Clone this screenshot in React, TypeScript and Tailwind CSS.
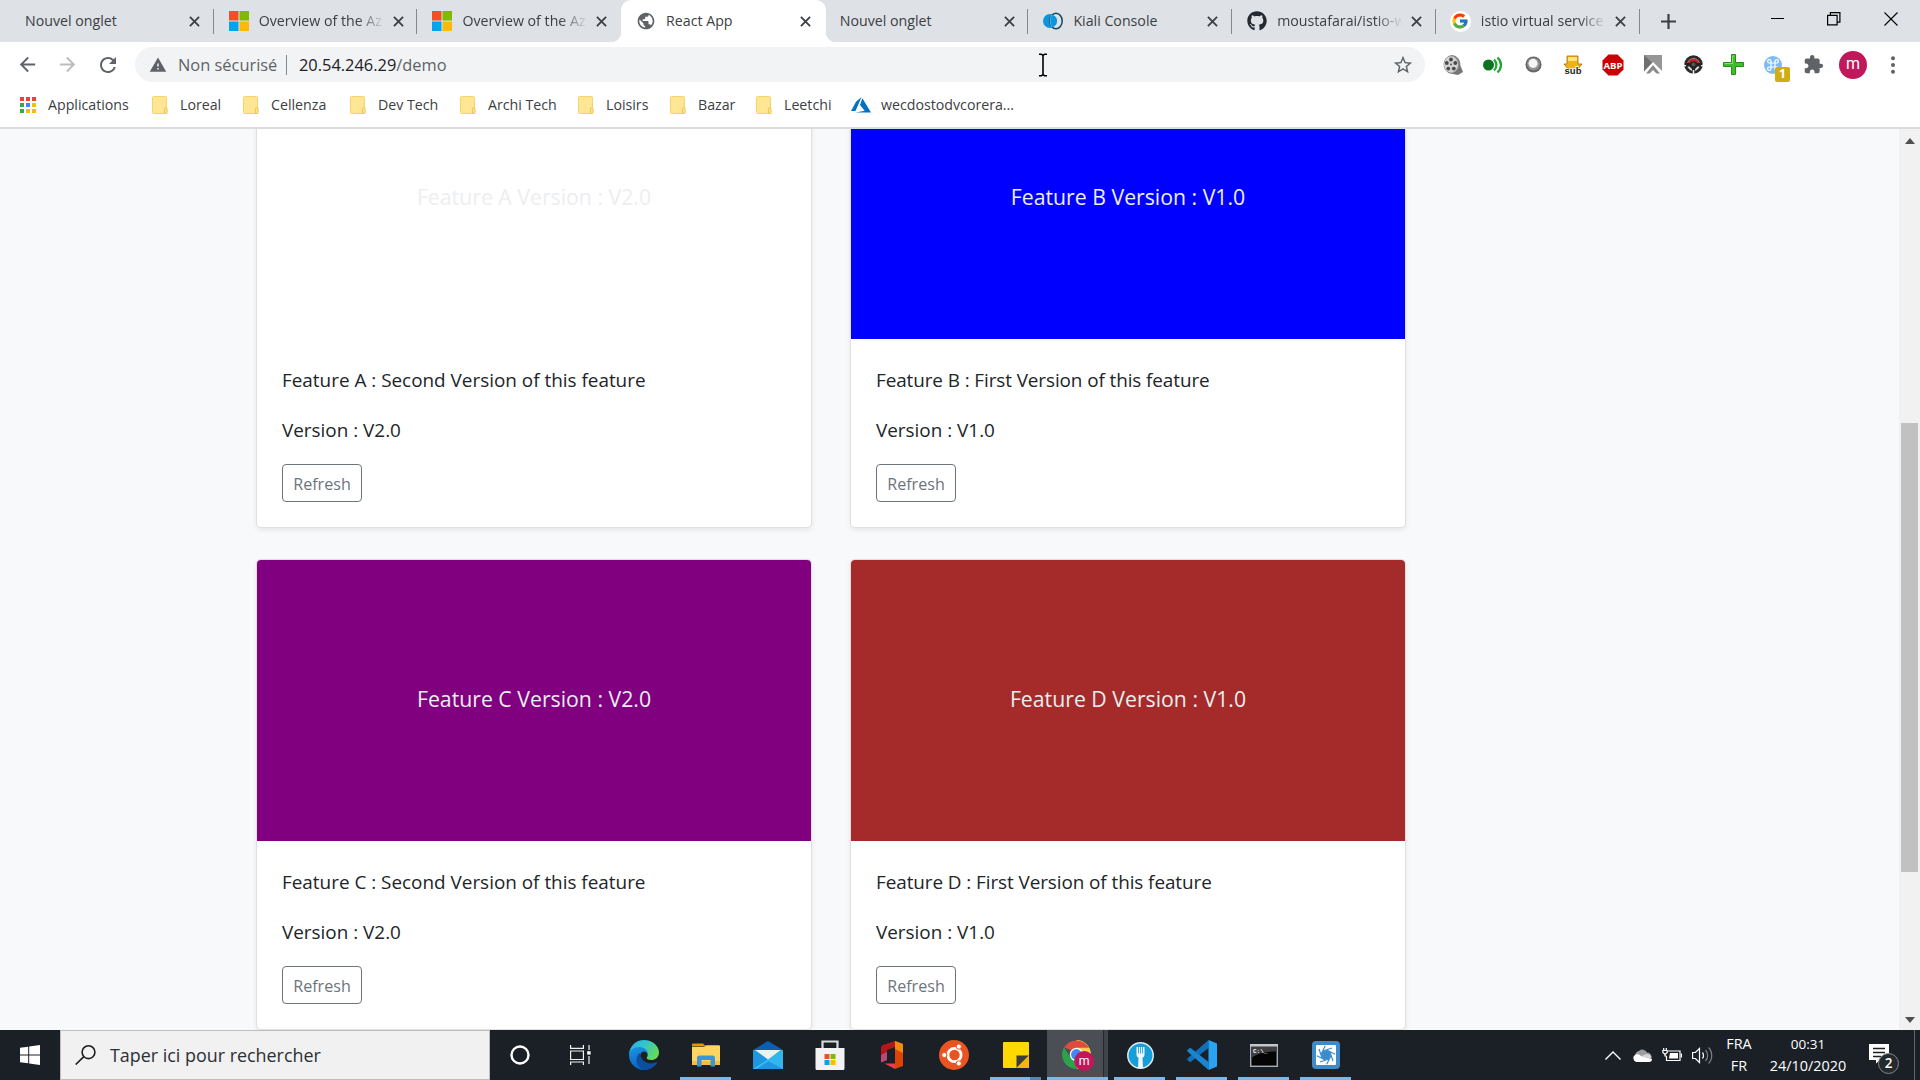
import React from 'react';
import { FaGithub } from 'react-icons/fa';
import { FcGoogle } from 'react-icons/fc';
import { MdArrowBack, MdArrowForward, MdRefresh, MdStarBorder, MdExtension, MdPublic, MdWarning } from 'react-icons/md';

/* ---------- Tab icons ---------- */

function MicrosoftLogo({ className }: { className: string }) {
  return (
    <svg className={className} viewBox="0 0 20 20">
      <path fill="#f25022" d="M0 0h9.5v9.5H0z" />
      <path fill="#7fba00" d="M10.5 0H20v9.5h-9.5z" />
      <path fill="#00a4ef" d="M0 10.5h9.5V20H0z" />
      <path fill="#ffb900" d="M10.5 10.5H20V20h-9.5z" />
    </svg>
  );
}

function KialiLogo() {
  return (
    <svg className="h-5 w-5" viewBox="0 0 20 20">
      <circle cx="7" cy="10" r="7" fill="#0d96df" />
      <ellipse cx="13" cy="10" rx="6.200" ry="7.800" fill="#dee1e6" stroke="#14495f" strokeWidth="1.500" />
      <path d="M9 3.800C13.500 5 14 8 14 10s-.5 5-5 6.200C7 13.500 7 6.500 9 3.800z" fill="#0d96df" />
      <path d="M9 3.800c-2.300 2.700-2.300 9.700 0 12.400" fill="none" stroke="#4fb8ea" strokeWidth="1" />
    </svg>
  );
}

function GoogleLogo() {
  return (
    <span className="-ml-[1px] flex h-[21px] w-[21px] items-center justify-center rounded-full bg-white">
      <FcGoogle className="h-[18px] w-[18px]" />
    </span>
  );
}

function CloseGlyph({ className }: { className: string }) {
  return (
    <svg className={className} viewBox="0 0 12 12" stroke="#3c4043" strokeWidth="2" fill="none">
      <path d="M1 1l10 10M11 1L1 11" />
    </svg>
  );
}

/* ---------- Tab strip ---------- */

type TabData = { title: string; icon?: React.ReactNode; fade?: boolean; active?: boolean; separator?: boolean };

const tabs: TabData[] = [
  { title: 'Nouvel onglet', separator: true },
  { title: 'Overview of the Az', icon: <MicrosoftLogo className="h-5 w-5" />, fade: true, separator: true },
  { title: 'Overview of the Az', icon: <MicrosoftLogo className="h-5 w-5" />, fade: true },
  { title: 'React App', icon: <MdPublic className="h-[22px] w-[22px] text-[#5f6368]" />, active: true },
  { title: 'Nouvel onglet', separator: true },
  { title: 'Kiali Console', icon: <KialiLogo />, separator: true },
  { title: 'moustafarai/istio-w', icon: <FaGithub className="h-5 w-5 text-[#24292e]" />, fade: true, separator: true },
  { title: 'istio virtual service', icon: <GoogleLogo />, fade: true, separator: true },
];

function Tab({ tab }: { tab: TabData }) {
  return (
    <div
      className={
        'relative flex h-[42px] w-[203.7px] items-center pl-[13px] ' +
        (tab.active ? '-ml-[2px] mr-[1px] w-[204.7px] rounded-t-[10px] bg-white pl-[15px]' : '')
      }
    >
      {tab.active && (
        <>
          <span className="absolute bottom-0 -left-2.5 h-2.5 w-2.5 bg-[radial-gradient(circle_at_0_0,transparent_10px,white_10.5px)]" />
          <span className="absolute -right-2.5 bottom-0 h-2.5 w-2.5 bg-[radial-gradient(circle_at_100%_0,transparent_10px,white_10.5px)]" />
        </>
      )}
      {tab.icon && <span className="mr-[10px] flex w-5 shrink-0 justify-center">{tab.icon}</span>}
      <span
        className={
          'text-[14.2px] whitespace-nowrap text-[#3c4043] ' +
          (tab.icon ? 'w-[131px] ' : 'w-[161px] ') +
          (tab.fade ? '[mask-image:linear-gradient(to_right,black_98px,transparent_126px)]' : '')
        }
      >
        {tab.title}
      </span>
      <CloseGlyph className="ml-[3px] h-[11px] w-[11px] shrink-0" />
      {tab.separator && <span className="absolute top-[9px] right-0.5 h-[25px] w-px bg-[#85888d]" />}
    </div>
  );
}

function TabStrip() {
  return (
    <div className="flex h-[42px] items-center bg-[#dee1e6] pl-3">
      {tabs.map((tab, i) => (
        <Tab key={i} tab={tab} />
      ))}
      <svg className="ml-[19px] h-[15px] w-[15px]" viewBox="0 0 15 15" stroke="#3c4043" strokeWidth="2.200">
        <path d="M7.500 0v15M0 7.500h15" />
      </svg>
      <div className="mb-[5px] ml-auto flex items-center pr-[22px]">
        <svg className="mr-[42px] h-[14px] w-[14px]" viewBox="0 0 14 14" stroke="#000" strokeWidth="1">
          <path d="M0 6.500h13" />
        </svg>
        <svg className="mr-[43px] h-[14px] w-[14px]" viewBox="0 0 14 14" stroke="#000" strokeWidth="1.200" fill="none">
          <path d="M.6 3.400h9.500v9.500H.6zM3.400 3.400V.6h9.500v9.500h-2.800" />
        </svg>
        <svg className="h-[14px] w-[14px]" viewBox="0 0 14 14" stroke="#000" strokeWidth="1.100">
          <path d="M.5 .5l13 13M13.500 .5l-13 13" />
        </svg>
      </div>
    </div>
  );
}

/* ---------- Toolbar extensions ---------- */

const extensions: React.ReactNode[] = [
  <svg viewBox="0 0 20 20" className="h-5 w-5">
    <path d="M13 4l5 8 2 5-5 3-5-1z" fill="#777" />
    <ellipse cx="9" cy="9.500" rx="8" ry="9" fill="#8c8c8c" stroke="#666" strokeWidth=".7" />
    <ellipse cx="8" cy="9.500" rx="7" ry="8.200" fill="#d2d2d2" />
    <g fill="#4a4a4a">
      <circle cx="8" cy="4.500" r="1.900" />
      <circle cx="12.300" cy="8" r="1.900" />
      <circle cx="10.800" cy="13.600" r="1.900" />
      <circle cx="5.300" cy="13.600" r="1.900" />
      <circle cx="3.800" cy="8" r="1.900" />
      <circle cx="8" cy="9.500" r=".9" />
    </g>
  </svg>,
  <svg viewBox="0 0 20 20" className="h-5 w-5" fill="none">
    <circle cx="5.500" cy="10" r="5.500" fill="#0b7420" />
    <path d="M11 4.500c3.200 3 3.200 8 0 11M14.500 2.500c4.600 4.300 4.600 10.700 0 15" stroke="#1fa62c" strokeWidth="2.300" />
  </svg>,
  <svg viewBox="0 0 18 18" className="h-[17px] w-[17px]">
    <circle cx="9" cy="9" r="8.500" fill="#666" />
    <circle cx="9" cy="8.600" r="6.800" fill="#8f8f8f" />
    <circle cx="8.500" cy="7.800" r="4.800" fill="#f5f5f5" />
    <path d="M9.500 12.500c2.500-.5 4-2.500 4-4.500" stroke="#ccc" fill="none" />
  </svg>,
  <svg viewBox="0 0 20 20" className="h-5 w-5">
    <path d="M4 1h11v8h4l-4 5H5L1 9h3z" fill="#edb31a" stroke="#a36c0c" strokeWidth=".8" />
    <path d="M5 2h9v4H5z" fill="#ffe475" />
    <text x="10" y="19.400" fontSize="9.500" fontWeight="700" textAnchor="middle" fill="#222" stroke="#fff" strokeWidth="1.500" paintOrder="stroke" fontFamily="Liberation Sans">
      sub
    </text>
  </svg>,
  <svg viewBox="0 0 22 22" className="h-[22px] w-[22px]">
    <path d="M6.500 .5h9l6 6v9l-6 6h-9l-6-6v-9z" fill="#cc0000" />
    <text x="11" y="14.500" fontSize="9.500" fontWeight="700" textAnchor="middle" fill="#fff" fontFamily="Open Sans">
      ABP
    </text>
  </svg>,
  <svg viewBox="0 0 18 19" className="h-[19px] w-[18px]">
    <path d="M0 0h18v18L9 9 0 17z" fill="#969696" />
    <path d="M0 0l9 8.500L0 17z" fill="#6f6f6f" />
    <path d="M0 16.500L9 7l9 9v3H0z" fill="#fff" />
    <path d="M2 18.500L9 10l7 8.500h-3.500L9 15l-3.500 3.500z" fill="#8a8a8a" />
  </svg>,
  <svg viewBox="0 0 19 19" className="h-[19px] w-[19px]">
    <circle cx="9.500" cy="9.500" r="9.300" fill="#2b2b2b" />
    <circle cx="9.500" cy="9.500" r="6.300" fill="#ddd" />
    <path d="M3.600 8a6.200 6.200 0 0 1 11.800 0z" fill="#c52323" />
    <path d="M1 8h5l1.500-1.500h4L13 8h5v3.500h-4.500L11 14v4H8v-4l-2.500-2.500H1z" fill="#222" />
    <path d="M0 10l2 1M19 10l-2 1" stroke="#fff" strokeWidth="1.200" />
    <circle cx="9.500" cy="9.500" r="2" fill="#555" />
    <path d="M8.700 15h1.600v4H8.700z" fill="#eee" />
  </svg>,
  <svg viewBox="0 0 21 21" className="h-[21px] w-[21px]">
    <path d="M8.500 .5h4V8.500h8v4h-8v8h-4v-8h-8v-4h8z" fill="#3fbf2b" stroke="#2a8a1c" />
    <path d="M9.500 2h2M9.500 2v7.500h-8" fill="none" stroke="#86e36f" />
  </svg>,
  <span className="relative">
    <svg viewBox="0 0 18 18" className="h-[18px] w-[18px]">
      <circle cx="9" cy="9" r="9" fill="#7dbcf3" />
      <path
        d="M7 7V5.300A1.700 1.700 0 1 0 5.300 7h7.400A1.700 1.700 0 1 0 11 5.300v7.400a1.700 1.700 0 1 0 1.700-1.700H5.300A1.700 1.700 0 1 0 7 12.700z"
        stroke="#fff"
        strokeWidth="1.200"
        fill="none"
      />
    </svg>
    <span className="absolute top-[11px] left-[11px] flex h-[15px] w-[15px] items-center justify-center rounded-[2px] bg-[#d2ad12] text-[12px] leading-none font-bold text-white">
      1
    </span>
  </span>,
  <MdExtension className="h-[21px] w-[21px] text-[#5f6368]" />,
  <span className="flex h-7 w-7 items-center justify-center rounded-full bg-[#c2185b] pb-[2px] font-['Roboto'] text-[16px] leading-none text-white">
    m
  </span>,
  <svg viewBox="0 0 4 18" className="h-[18px] w-1" fill="#5f6368">
    <circle cx="2" cy="2.200" r="2" />
    <circle cx="2" cy="9" r="2" />
    <circle cx="2" cy="15.800" r="2" />
  </svg>,
];

function Toolbar() {
  return (
    <div className="flex h-[45px] items-center bg-white pl-4">
      <MdArrowBack className="h-[23px] w-[23px] text-[#5f6368]" />
      <MdArrowForward className="ml-[17px] h-[23px] w-[23px] text-[#babcbe]" />
      <MdRefresh className="ml-[17px] h-[24px] w-[24px] text-[#5f6368]" />
      <div className="ml-[15px] flex h-[35px] w-[1290px] items-center rounded-full bg-[#f1f3f4] pr-[11px] pl-[14px] text-[16.400px]">
        <MdWarning className="h-[18px] w-[18px] text-[#5f6368]" />
        <span className="ml-[11px] w-[108px] pt-px text-[#5f6368]">Non sécurisé</span>
        <span className="h-5 w-px bg-[#85888d]" />
        <span className="ml-3 w-[149px] pt-px text-[#202124]">
          20.54.246.29<span className="text-[#5f6368]">/demo</span>
        </span>
        <svg className="ml-[590px] h-6 w-[10px]" viewBox="0 0 10 24" stroke="#000" strokeWidth="1.600" fill="none">
          <path d="M1 1.300h2.500L5 2.300l1.500-1H9M5 2v20M1 22.700h2.500l1.500-1 1.500 1H9" />
        </svg>
        <MdStarBorder className="ml-auto h-[22px] w-[22px] text-[#5f6368]" />
      </div>
      <div className="ml-2 flex">
        {extensions.map((icon, i) => (
          <span key={i} className="flex w-10 items-center justify-center">
            {icon}
          </span>
        ))}
      </div>
    </div>
  );
}

/* ---------- Bookmarks ---------- */

function Folder() {
  return (
    <svg viewBox="0 0 16 18" className="h-[18px] w-4">
      <path d="M1.500 .5h12a1 1 0 0 1 1 1v15a1 1 0 0 1-1 1h-12a1 1 0 0 1-1-1v-15a1 1 0 0 1 1-1z" fill="#ffe694" stroke="#f6d568" />
      <path d="M12.500 17.500v-4.500a1.300 1.300 0 0 1 2.600 0v3.500a1 1 0 0 1-1 1z" fill="#ffe694" stroke="#eec23f" strokeWidth=".9" />
    </svg>
  );
}

function Bookmark({ label, width, children }: { label: string; width: string; children?: React.ReactNode }) {
  return (
    <div className={'flex shrink-0 items-center whitespace-nowrap ' + width}>
      {children ?? <Folder />}
      <span className="ml-3">{label}</span>
    </div>
  );
}

function BookmarksBar() {
  return (
    <div className="flex h-[42px] items-center border-b-2 border-[#dadce0] bg-white pb-1 pl-5 text-[14.2px] text-[#3c4043]">
      <Bookmark label="Applications" width="w-[132px]">
        <svg viewBox="0 0 16 16" className="h-4 w-4">
          <path fill="#ea4335" d="M0 0h4v4H0zM6 0h4v4H6zM12 0h4v4h-4z" />
          <path fill="#34a853" d="M0 6h4v4H0zM0 12h4v4H0z" />
          <path fill="#4285f4" d="M6 6h4v4H6z" />
          <path fill="#fbbc05" d="M12 6h4v4h-4zM6 12h4v4H6zM12 12h4v4h-4z" />
        </svg>
      </Bookmark>
      <Bookmark label="Loreal" width="w-[91px]" />
      <Bookmark label="Cellenza" width="w-[107px]" />
      <Bookmark label="Dev Tech" width="w-[110px]" />
      <Bookmark label="Archi Tech" width="w-[118px]" />
      <Bookmark label="Loisirs" width="w-[92px]" />
      <Bookmark label="Bazar" width="w-[86px]" />
      <Bookmark label="Leetchi" width="w-[95px]" />
      <Bookmark label="wecdostodvcorera..." width="w-[170px]">
        <svg viewBox="0 0 20 16" className="-mr-[2px] h-4 w-5" fill="#0072c6">
          <path d="M10.600 0L5 4.700 0 14h4.500zM11.400 1.200L9 8l4.700 5.800L4.700 15.600H20z" />
        </svg>
      </Bookmark>
    </div>
  );
}

/* ---------- Page ---------- */

type Feature = { name: string; order: string; version: string; banner: string; tracking: string };

const features: Feature[] = [
  { name: 'Feature A', order: 'Second', version: 'V2.0', banner: 'bg-white', tracking: 'tracking-normal' },
  { name: 'Feature B', order: 'First', version: 'V1.0', banner: 'bg-[#0000ff]', tracking: 'tracking-[-0.090px]' },
  { name: 'Feature C', order: 'Second', version: 'V2.0', banner: 'bg-[#800080]', tracking: 'tracking-normal' },
  { name: 'Feature D', order: 'First', version: 'V1.0', banner: 'bg-[#a52a2a]', tracking: 'tracking-[-0.075px]' },
];

function FeatureCard({ feature }: { feature: Feature }) {
  return (
    <article className="h-[471px] overflow-hidden rounded-[5px] border border-black/12 bg-white shadow-[0_2px_5px_rgba(0,0,0,0.08)]">
      <div
        className={
          'flex h-[281px] items-center justify-center pb-1 text-[21.250px] text-[#eceeef] ' + feature.banner
        }
      >
        {feature.name} Version : {feature.version}
      </div>
      <div className="px-[25px] pt-[26px] text-[18.900px] leading-[30px] text-[#212529]">
        <p className={'mb-5 ' + feature.tracking}>
          {feature.name} : {feature.order} Version of this feature
        </p>
        <p className="mb-[19px]">Version : {feature.version}</p>
        <button className="flex h-[38px] w-20 items-center justify-center rounded-[4px] border border-[#6c757d] pt-px text-[16.100px] text-[#6c757d]">
          Refresh
        </button>
      </div>
    </article>
  );
}

function Page() {
  return (
    <div className="flex h-[901px] bg-[#f8f9fa]">
      <main className="h-full flex-1 overflow-hidden">
        <div className="-mt-[72px] ml-[256px] grid w-[1150px] grid-cols-[556px_556px] gap-x-[38px] gap-y-[31px]">
          {features.map((f) => (
            <FeatureCard key={f.name} feature={f} />
          ))}
        </div>
      </main>
      <div className="flex w-[21px] flex-col items-center bg-[#f1f1f1] pt-[9px] pb-[7px]">
        <svg viewBox="0 0 10 6" className="h-[6px] w-[10px]" fill="#505050">
          <path d="M5 0l5 6H0z" />
        </svg>
        <div className="mt-[279px] h-[449px] w-[17px] bg-[#c1c1c1]" />
        <svg viewBox="0 0 10 6" className="mt-auto h-[6px] w-[10px]" fill="#505050">
          <path d="M0 0h10L5 6z" />
        </svg>
      </div>
    </div>
  );
}

/* ---------- Taskbar icons ---------- */

function EdgeIcon() {
  return (
    <svg viewBox="0 0 30 30" className="h-[30px] w-[30px]">
      <defs>
        <linearGradient id="edge-top" x1="0" y1="0" x2="1" y2=".5">
          <stop offset="0" stopColor="#29a9e8" />
          <stop offset=".5" stopColor="#32c5cf" />
          <stop offset="1" stopColor="#63d957" />
        </linearGradient>
        <linearGradient id="edge-left" x1="0" y1="0" x2=".3" y2="1">
          <stop offset="0" stopColor="#1b96e0" />
          <stop offset="1" stopColor="#0b62c4" />
        </linearGradient>
      </defs>
      <path d="M0 14.500C.5 6 7 0 15 0c8.500 0 15 6 15 12.500 0 5-4 7.500-7.500 7.500-3 0-4.800-1-4.800-2 0-.8 1-1.200 1-3.200 0-3-3-5.800-7.500-5.800C6 9 2 11 0 14.500z" fill="url(#edge-top)" />
      <path d="M0 15c0-5 5-8 10-8 5.500 0 9 3.500 9 7.500-1-2-2.500-3-4.200-3-2 0-3.800 2-3.800 5.500 0 6 6 11.500 12 10-2.500 2-5 3-8 3C6.500 30 0 23 0 15z" fill="url(#edge-left)" />
      <path d="M11 13c-2.500 1.500-3.500 4-3.500 7 0 4.500 3 8.500 7.500 10 6 0 10.500-3 13-7 .4-.8-.3-1-1-.700-6 2.800-15 .5-16-9.300z" fill="#0c4f9e" />
    </svg>
  );
}

function ExplorerIcon() {
  return (
    <svg viewBox="0 0 28 24" className="h-6 w-7">
      <path d="M0 1.500A1 1 0 0 1 1 .5h10l3 3H0z" fill="#d99a0b" />
      <path d="M0 4h12l2-1.800h13a1 1 0 0 1 1 1V22H0z" fill="#ffd461" />
      <path d="M0 18h28v4H0z" fill="#f5bd45" />
      <path d="M5 23.500V15a2.500 2.500 0 0 1 2.500-2.500h13A2.500 2.500 0 0 1 23 15v8.500h-4.500V17h-9v6.500z" fill="#3d95d8" />
    </svg>
  );
}

function MailIcon() {
  return (
    <svg viewBox="0 0 30 28" className="h-7 w-[30px]">
      <path d="M0 9L15 0l15 9z" fill="#0c5eb0" />
      <path d="M0 9h30v19H0z" fill="#2196e0" />
      <path d="M30 9v19L15 18.500z" fill="#2ba8ea" />
      <path d="M0 28L30 9v2L3 28z" fill="#38c0f2" />
      <path d="M14 19.500L30 9v0L30 28z" fill="#33b6ee" />
      <path d="M2 9h26l-13 9.500z" fill="#eef0f3" />
    </svg>
  );
}

function StoreIcon() {
  return (
    <svg viewBox="0 0 30 30" className="h-[30px] w-[30px]">
      <path d="M7.500 9V1.500h15V9" fill="none" stroke="#dcdcdc" strokeWidth="2.200" />
      <path d="M.5 8h29v20.500a1.500 1.500 0 0 1-1.500 1.500H2a1.500 1.500 0 0 1-1.500-1.500z" fill="#f3f3f3" />
      <path fill="#f25022" d="M9.500 14h5v5h-5z" />
      <path fill="#7fba00" d="M15.500 14h5v5h-5z" />
      <path fill="#00a4ef" d="M9.500 20h5v5h-5z" />
      <path fill="#ffb900" d="M15.500 20h5v5h-5z" />
    </svg>
  );
}

function OfficeIcon() {
  return (
    <svg viewBox="0 0 24 28" className="h-7 w-6">
      <path d="M15 0l8 3v22l-8 3V0z" fill="#dc4405" />
      <path d="M15 0l8 3v9l-8-4z" fill="#f08a10" />
      <path d="M15 0v6L7 9v10l-6 2.500V7q0-2 2-3z" fill="#b5161b" />
      <path d="M1 14l6-3v8l-6 2.500z" fill="#b84a78" />
      <path d="M4.500 22.500H15V28z" fill="#f03a54" />
    </svg>
  );
}

function UbuntuIcon() {
  return (
    <svg viewBox="0 0 30 30" className="h-[30px] w-[30px]">
      <circle cx="15" cy="15" r="15" fill="#e95420" />
      <circle cx="15.500" cy="15" r="6.600" fill="none" stroke="#fff" strokeWidth="2.800" />
      <g fill="#fff" stroke="#e95420" strokeWidth="1">
        <circle cx="5.300" cy="15" r="2.600" />
        <circle cx="19.800" cy="6.600" r="2.600" />
        <circle cx="19.800" cy="23.400" r="2.600" />
      </g>
    </svg>
  );
}

function StickyIcon() {
  return (
    <svg viewBox="0 0 26 26" className="h-[26px] w-[26px]">
      <path d="M1 0h24a1 1 0 0 1 1 1v24a1 1 0 0 1-1 1H1a1 1 0 0 1-1-1V1a1 1 0 0 1 1-1z" fill="#ffd800" />
      <path d="M13.500 13.500H26L13.500 26z" fill="#3d3d3d" />
      <path d="M26 13.500V26H13.500z" fill="#f5b50a" />
    </svg>
  );
}

function ChromeIcon() {
  return (
    <svg viewBox="0 0 32 30" className="ml-[6px] h-[31px] w-[33px]">
      <path d="M14 14V0A14 14 0 0 1 28 14 14 14 0 0 1 14 28l7-14z" fill="#fbd04b" />
      <path d="M26.100 7.500H14L9 10 2 7A14 14 0 0 1 26.100 7.500z" fill="#df4b3f" />
      <path d="M1.900 7A14 14 0 0 0 14 28l5-9.500-10.500-1z" fill="#2ba24c" />
      <circle cx="14" cy="14" r="6.500" fill="#fff" />
      <circle cx="14" cy="14" r="5.200" fill="#4285f4" />
      <circle cx="21.500" cy="20.300" r="9.700" fill="#c2185b" />
      <text x="21.500" y="24" fontSize="12" textAnchor="middle" fill="#fff" fontFamily="Roboto">
        m
      </text>
    </svg>
  );
}

function ForkIcon() {
  return (
    <svg viewBox="0 0 27 27" className="h-[27px] w-[27px]">
      <circle cx="13.500" cy="13.500" r="12.700" fill="#159fd9" stroke="#e4eaee" strokeWidth="1.500" />
      <path
        d="M9.500 5h1.700v6.500h.8V5h1.100v6.500h.8V5H15v6.500h.8V5h1.700v7.500c0 2-1 2.800-2 3.300l.5 10.200h-5l.5-10.200c-1-.5-2-1.300-2-3.300z"
        fill="#f1f3f5"
      />
    </svg>
  );
}

function VsCodeIcon() {
  return (
    <svg viewBox="0 0 30 30" className="h-[30px] w-[30px]">
      <path d="M21.500 0v8L4 21.800q-.8.600-1.600 0L.5 20q-.8-.8 0-1.600z" fill="#0f70b7" />
      <path d="M21.500 30v-8L4 8.200q-.8-.6-1.600 0L.5 10q-.8.800 0 1.600z" fill="#1985cf" />
      <path d="M21.500 0L30 3.500v23L21.500 30z" fill="#2ba3f5" />
    </svg>
  );
}

function TerminalIcon() {
  return (
    <svg viewBox="0 0 28 23" className="h-[23px] w-7">
      <rect x=".7" y=".7" width="26.600" height="21.600" fill="#050505" stroke="#a9acb0" strokeWidth="1.400" />
      <path d="M1.400 1.400h25.200v6C18 7.400 8 9 1.400 14z" fill="#3d3f42" />
      <path d="M0 0h28v2.500H0z" fill="#c5c8cb" />
      <text x="3" y="9" fontSize="6" fill="#fff" fontFamily="Liberation Mono" fontWeight="700">
        C:\_
      </text>
    </svg>
  );
}

function ApertureIcon() {
  const blades = [0, 45, 90, 135, 180, 225, 270, 315];
  return (
    <svg viewBox="0 0 28 28" className="h-7 w-7">
      <rect width="28" height="28" rx="4" fill="#3c8ccc" />
      <rect x="4" y="4" width="20" height="20" rx="1" fill="#fff" />
      <circle cx="14" cy="14" r="4.800" fill="#3c8ccc" />
      <g stroke="#3c8ccc" strokeWidth="1.200">
        {blades.map((a) => (
          <path key={a} d="M11 10L20 7" transform={`rotate(${a} 14 14)`} />
        ))}
      </g>
    </svg>
  );
}

/* ---------- Taskbar ---------- */

type TaskItem = { icon: React.ReactNode; running?: boolean; stacked?: boolean; focused?: boolean };

const taskItems: TaskItem[] = [
  { icon: <EdgeIcon /> },
  { icon: <ExplorerIcon />, running: true },
  { icon: <MailIcon /> },
  { icon: <StoreIcon /> },
  { icon: <OfficeIcon /> },
  { icon: <UbuntuIcon /> },
  { icon: <StickyIcon />, running: true, stacked: true },
  { icon: <ChromeIcon />, running: true, focused: true },
  { icon: <ForkIcon />, running: true },
  { icon: <VsCodeIcon />, running: true },
  { icon: <TerminalIcon />, running: true },
  { icon: <ApertureIcon />, running: true },
];

function TaskButton({ item }: { item: TaskItem }) {
  if (item.focused) {
    return (
      <div className="relative flex h-[50px] w-[62px]">
        <div className="flex w-[57px] items-center justify-center border-r border-[#24292f] bg-[#4b4f55]">{item.icon}</div>
        <div className="w-[4px] bg-[#3f444a]" />
        <span className="absolute bottom-0 left-0 h-[3px] w-[61px] bg-[#76b9ed]" />
      </div>
    );
  }
  return (
    <div className="relative flex h-[50px] w-[62px] items-center justify-center">
      {item.icon}
      {item.running && (
        <span className="absolute bottom-0 left-[5px] flex h-[3px] w-[51px] bg-[#76b9ed]">
          {item.stacked && <span className="ml-auto h-full w-[11px] bg-[#5887ad]" />}
        </span>
      )}
    </div>
  );
}

function Tray() {
  return (
    <div className="ml-auto flex h-full items-center text-[14.400px] text-white">
      <svg viewBox="0 0 16 9" className="h-[9px] w-4" fill="none" stroke="#fff" strokeWidth="1.400">
        <path d="M.5 8.500L8 1l7.500 7.500" />
      </svg>
      <svg viewBox="0 0 20 13" className="ml-[11px] h-[13px] w-5">
        <path d="M3.500 6a4 4 0 0 1 3.500-4 5 5 0 0 1 8 1.500 4.500 4.500 0 0 1 4.500 5L10 7z" fill="#9b9da0" />
        <path d="M4.500 13a4 4 0 0 1-1-7.500c2-.6 3.500 0 5 1L20 10a3 3 0 0 1-3 3z" fill="#fff" />
        <path d="M8.500 7.500l5-2.300a4.500 4.500 0 0 1 6 4.500z" fill="#d3d4d6" />
      </svg>
      <svg viewBox="0 0 20 14" className="ml-[10px] h-[14px] w-5" fill="none" stroke="#fff" strokeWidth="1.200">
        <path d="M6 3h12v9.500H4.500V8" />
        <path d="M8 5h8v5.500H7z" fill="#fff" stroke="none" />
        <path d="M19.400 5.500v4" />
        <path d="M.8 2.500h4.400v2L3 6.500.8 4.500zM1.700 0v2.500M4.300 0v2.500M3 6.500V8h1.500" />
      </svg>
      <svg viewBox="0 0 21 17" className="ml-[10px] h-[17px] w-[21px]" fill="none" stroke="#fff" strokeWidth="1.200">
        <path d="M.6 5.500h2.800L7.500 1.500v14l-4.100-4H.6z" />
        <path d="M10.500 5.500c1.300 1.500 1.300 4.500 0 6" />
        <path d="M13.500 3c2.800 3 2.800 8 0 11M16.500.5c4.300 4.300 4.300 11.700 0 16" stroke="#7f8286" />
      </svg>
      <div className="ml-[13px] flex w-[26px] flex-col items-center gap-[2px] leading-5">
        <span>FRA</span>
        <span>FR</span>
      </div>
      <div className="ml-[17px] flex w-[78px] flex-col items-center gap-[2px] leading-5">
        <span className="text-[13.500px]">00:31</span>
        <span>24/10/2020</span>
      </div>
      <div className="relative ml-[22px] h-[22px] w-[30px]">
        <svg viewBox="0 0 20 20" className="h-5 w-5">
          <path d="M0 0h20v16h-9l-4 3.500V16H0z" fill="#fff" />
          <path d="M4 4.500h12M4 8.500h12M4 12.500h8" stroke="#1b1f24" strokeWidth="1.300" />
        </svg>
        <span className="absolute top-[9px] left-[9px] flex h-[21px] w-[21px] items-center justify-center rounded-full border border-[#85888b] bg-[#26292d] text-[13.500px] leading-none font-semibold">
          2
        </span>
      </div>
      <div className="ml-[15px] h-full w-px bg-[#63666a]" />
      <div className="w-[5px]" />
    </div>
  );
}

function Taskbar() {
  return (
    <div className="flex h-[50px] items-center bg-[#1b2027]">
      <div className="flex w-[60px] justify-center">
        <svg viewBox="0 0 20 20" className="h-5 w-5" fill="#fff">
          <path d="M0 2.800L8.200 1.700v7.800H0zM9.200 1.500L20 0v9.500H9.200zM0 10.500h8.200v7.800L0 17.200zM9.200 10.500H20V20L9.200 18.500z" />
        </svg>
      </div>
      <div className="flex h-[50px] w-[430px] items-center border border-[#bdbdbd] bg-[#f1f1f1] pl-[14px]">
        <svg viewBox="0 0 21 20" className="h-5 w-[21px]" fill="none" stroke="#1d1d1d" strokeWidth="1.600">
          <circle cx="13.500" cy="7.200" r="6.400" />
          <path d="M8.800 11.700L.7 19.500" />
        </svg>
        <span className="ml-[14px] text-[17.900px] text-[#2c2f33]">Taper ici pour rechercher</span>
      </div>
      <div className="flex w-[60px] justify-center">
        <svg viewBox="0 0 20 20" className="h-5 w-5">
          <circle cx="10" cy="10" r="8.500" fill="none" stroke="#fff" strokeWidth="2.400" />
        </svg>
      </div>
      <div className="flex w-[63px] justify-center pr-[2px]">
        <svg viewBox="0 0 21 20" className="h-5 w-[21px]" fill="none" stroke="#f1f1f1" strokeWidth="1.200">
          <path d="M.6 0v3.400h12.800V0M.6 6h12.800v8.500H.6zM.6 20v-3h12.800v3M19 0v5M19 11v8" />
          <path d="M17.200 6.200h3.400v3.400h-3.400z" fill="#fff" stroke="none" />
        </svg>
      </div>
      <div className="flex">
        {taskItems.map((item, i) => (
          <TaskButton key={i} item={item} />
        ))}
      </div>
      <Tray />
    </div>
  );
}

export default function App() {
  return (
    <div className="flex h-[1080px] w-[1920px] flex-col overflow-hidden bg-white font-['Open_Sans','Noto_Sans',sans-serif]">
      <TabStrip />
      <Toolbar />
      <BookmarksBar />
      <Page />
      <Taskbar />
    </div>
  );
}
